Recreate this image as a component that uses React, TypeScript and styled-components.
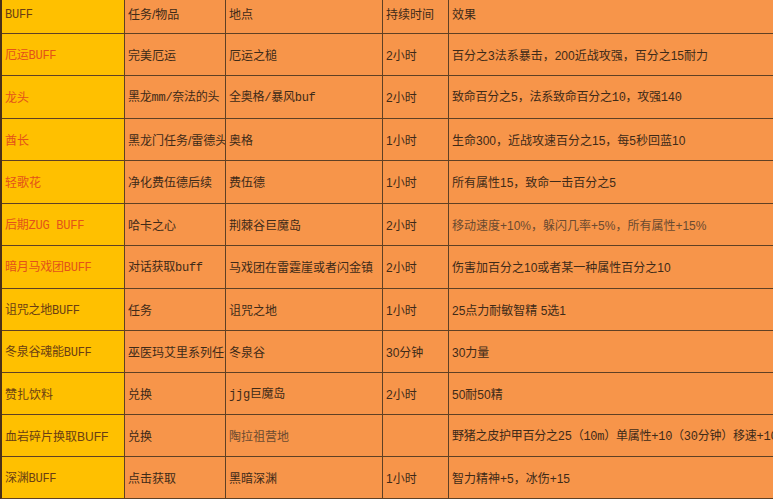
import React from "react";
import styled, { createGlobalStyle } from "styled-components";

const GlobalStyle = createGlobalStyle`
  html, body {
    margin: 0;
    padding: 0;
    background: #f7954a;
    overflow: hidden;
  }
  #root {
    width: 773px;
    height: 499px;
    overflow: hidden;
  }
`;

const Sheet = styled.div`
  display: grid;
  width: 920px;
  grid-template-columns: 122px 100px 156px 65px 1fr;
  grid-template-rows: 33px 41px 42px 41px 42px 41px 42px 41px 41px 41px 41px 41px;
  column-gap: 1px;
  row-gap: 1px;
  background: #5f4024;
  border-left: 2px solid #4a3018;
  border-bottom: 1px solid #5f4024;
`;

type Tone = "gold" | "orange";
type Ink = "red" | "brown" | "dark" | "soft";

const inkColors: Record<Ink, string> = {
  red: "#e3521a",
  brown: "#6a3e14",
  dark: "#3e2a18",
  soft: "#6b4a30",
};

const Cell = styled.div<{ $tone: Tone; $ink: Ink; $mono?: boolean; $head?: boolean }>`
  display: flex;
  align-items: center;
  padding: ${(p) => (p.$head ? "0 0 4px 3px" : "2px 0 0 3px")};
  overflow: hidden;
  white-space: nowrap;
  background: ${(p) => (p.$tone === "gold" ? "#ffc000" : "#f7954a")};
  color: ${(p) => inkColors[p.$ink]};
  font-family: ${(p) =>
    p.$mono
      ? `"Liberation Mono", "Noto Sans CJK SC", monospace`
      : `"Liberation Sans", "Noto Sans CJK SC", sans-serif`};
  font-size: 12px;
  line-height: 14px;
  letter-spacing: ${(p) => (p.$mono ? "-0.25px" : "0")};
`;

type CellDef = { text: string; mono?: boolean; ink?: Ink };
type RowDef = [CellDef, CellDef, CellDef, CellDef, CellDef];

const rows: RowDef[] = [
  [
    { text: "BUFF", mono: true, ink: "brown" },
    { text: "任务/物品" },
    { text: "地点" },
    { text: "持续时间" },
    { text: "效果" },
  ],
  [
    { text: "厄运BUFF", mono: true, ink: "red" },
    { text: "完美厄运" },
    { text: "厄运之槌" },
    { text: "2小时" },
    { text: "百分之3法系暴击，200近战攻强，百分之15耐力" },
  ],
  [
    { text: "龙头", ink: "red" },
    { text: "黑龙mm/奈法的头", mono: true },
    { text: "全奥格/暴风buf", mono: true },
    { text: "2小时" },
    { text: "致命百分之5，法系致命百分之10，攻强140", mono: true },
  ],
  [
    { text: "酋长", ink: "red" },
    { text: "黑龙门任务/雷德头" },
    { text: "奥格" },
    { text: "1小时" },
    { text: "生命300，近战攻速百分之15，每5秒回蓝10" },
  ],
  [
    { text: "轻歌花", ink: "red" },
    { text: "净化费伍德后续" },
    { text: "费伍德" },
    { text: "1小时" },
    { text: "所有属性15，致命一击百分之5" },
  ],
  [
    { text: "后期ZUG BUFF", mono: true, ink: "red" },
    { text: "哈卡之心" },
    { text: "荆棘谷巨魔岛" },
    { text: "2小时" },
    { text: "移动速度+10%，躲闪几率+5%，所有属性+15%", ink: "soft" },
  ],
  [
    { text: "暗月马戏团BUFF", mono: true, ink: "red" },
    { text: "对话获取buff", mono: true },
    { text: "马戏团在雷霆崖或者闪金镇" },
    { text: "2小时" },
    { text: "伤害加百分之10或者某一种属性百分之10" },
  ],
  [
    { text: "诅咒之地BUFF", mono: true, ink: "brown" },
    { text: "任务" },
    { text: "诅咒之地" },
    { text: "1小时" },
    { text: "25点力耐敏智精  5选1" },
  ],
  [
    { text: "冬泉谷魂能BUFF", mono: true, ink: "brown" },
    { text: "巫医玛艾里系列任务" },
    { text: "冬泉谷" },
    { text: "30分钟" },
    { text: "30力量" },
  ],
  [
    { text: "赞扎饮料", ink: "brown" },
    { text: "兑换" },
    { text: "jjg巨魔岛", mono: true },
    { text: "2小时" },
    { text: "50耐50精" },
  ],
  [
    { text: "血岩碎片换取BUFF", ink: "brown" },
    { text: "兑换" },
    { text: "陶拉祖营地", ink: "soft" },
    { text: "" },
    { text: "野猪之皮护甲百分之25（10m）单属性+10（30分钟）移速+10%", mono: true },
  ],
  [
    { text: "深渊BUFF", mono: true, ink: "brown" },
    { text: "点击获取" },
    { text: "黑暗深渊" },
    { text: "1小时" },
    { text: "智力精神+5，冰伤+15" },
  ],
];

export default function App() {
  return (
    <>
      <GlobalStyle />
      <Sheet>
        {rows.map((row, r) =>
          row.map((cell, c) => (
            <Cell
              key={`${r}-${c}`}
              $tone={c === 0 ? "gold" : "orange"}
              $ink={cell.ink ?? "dark"}
              $mono={cell.mono}
              $head={r === 0}
            >
              {cell.text}
            </Cell>
          ))
        )}
      </Sheet>
    </>
  );
}
